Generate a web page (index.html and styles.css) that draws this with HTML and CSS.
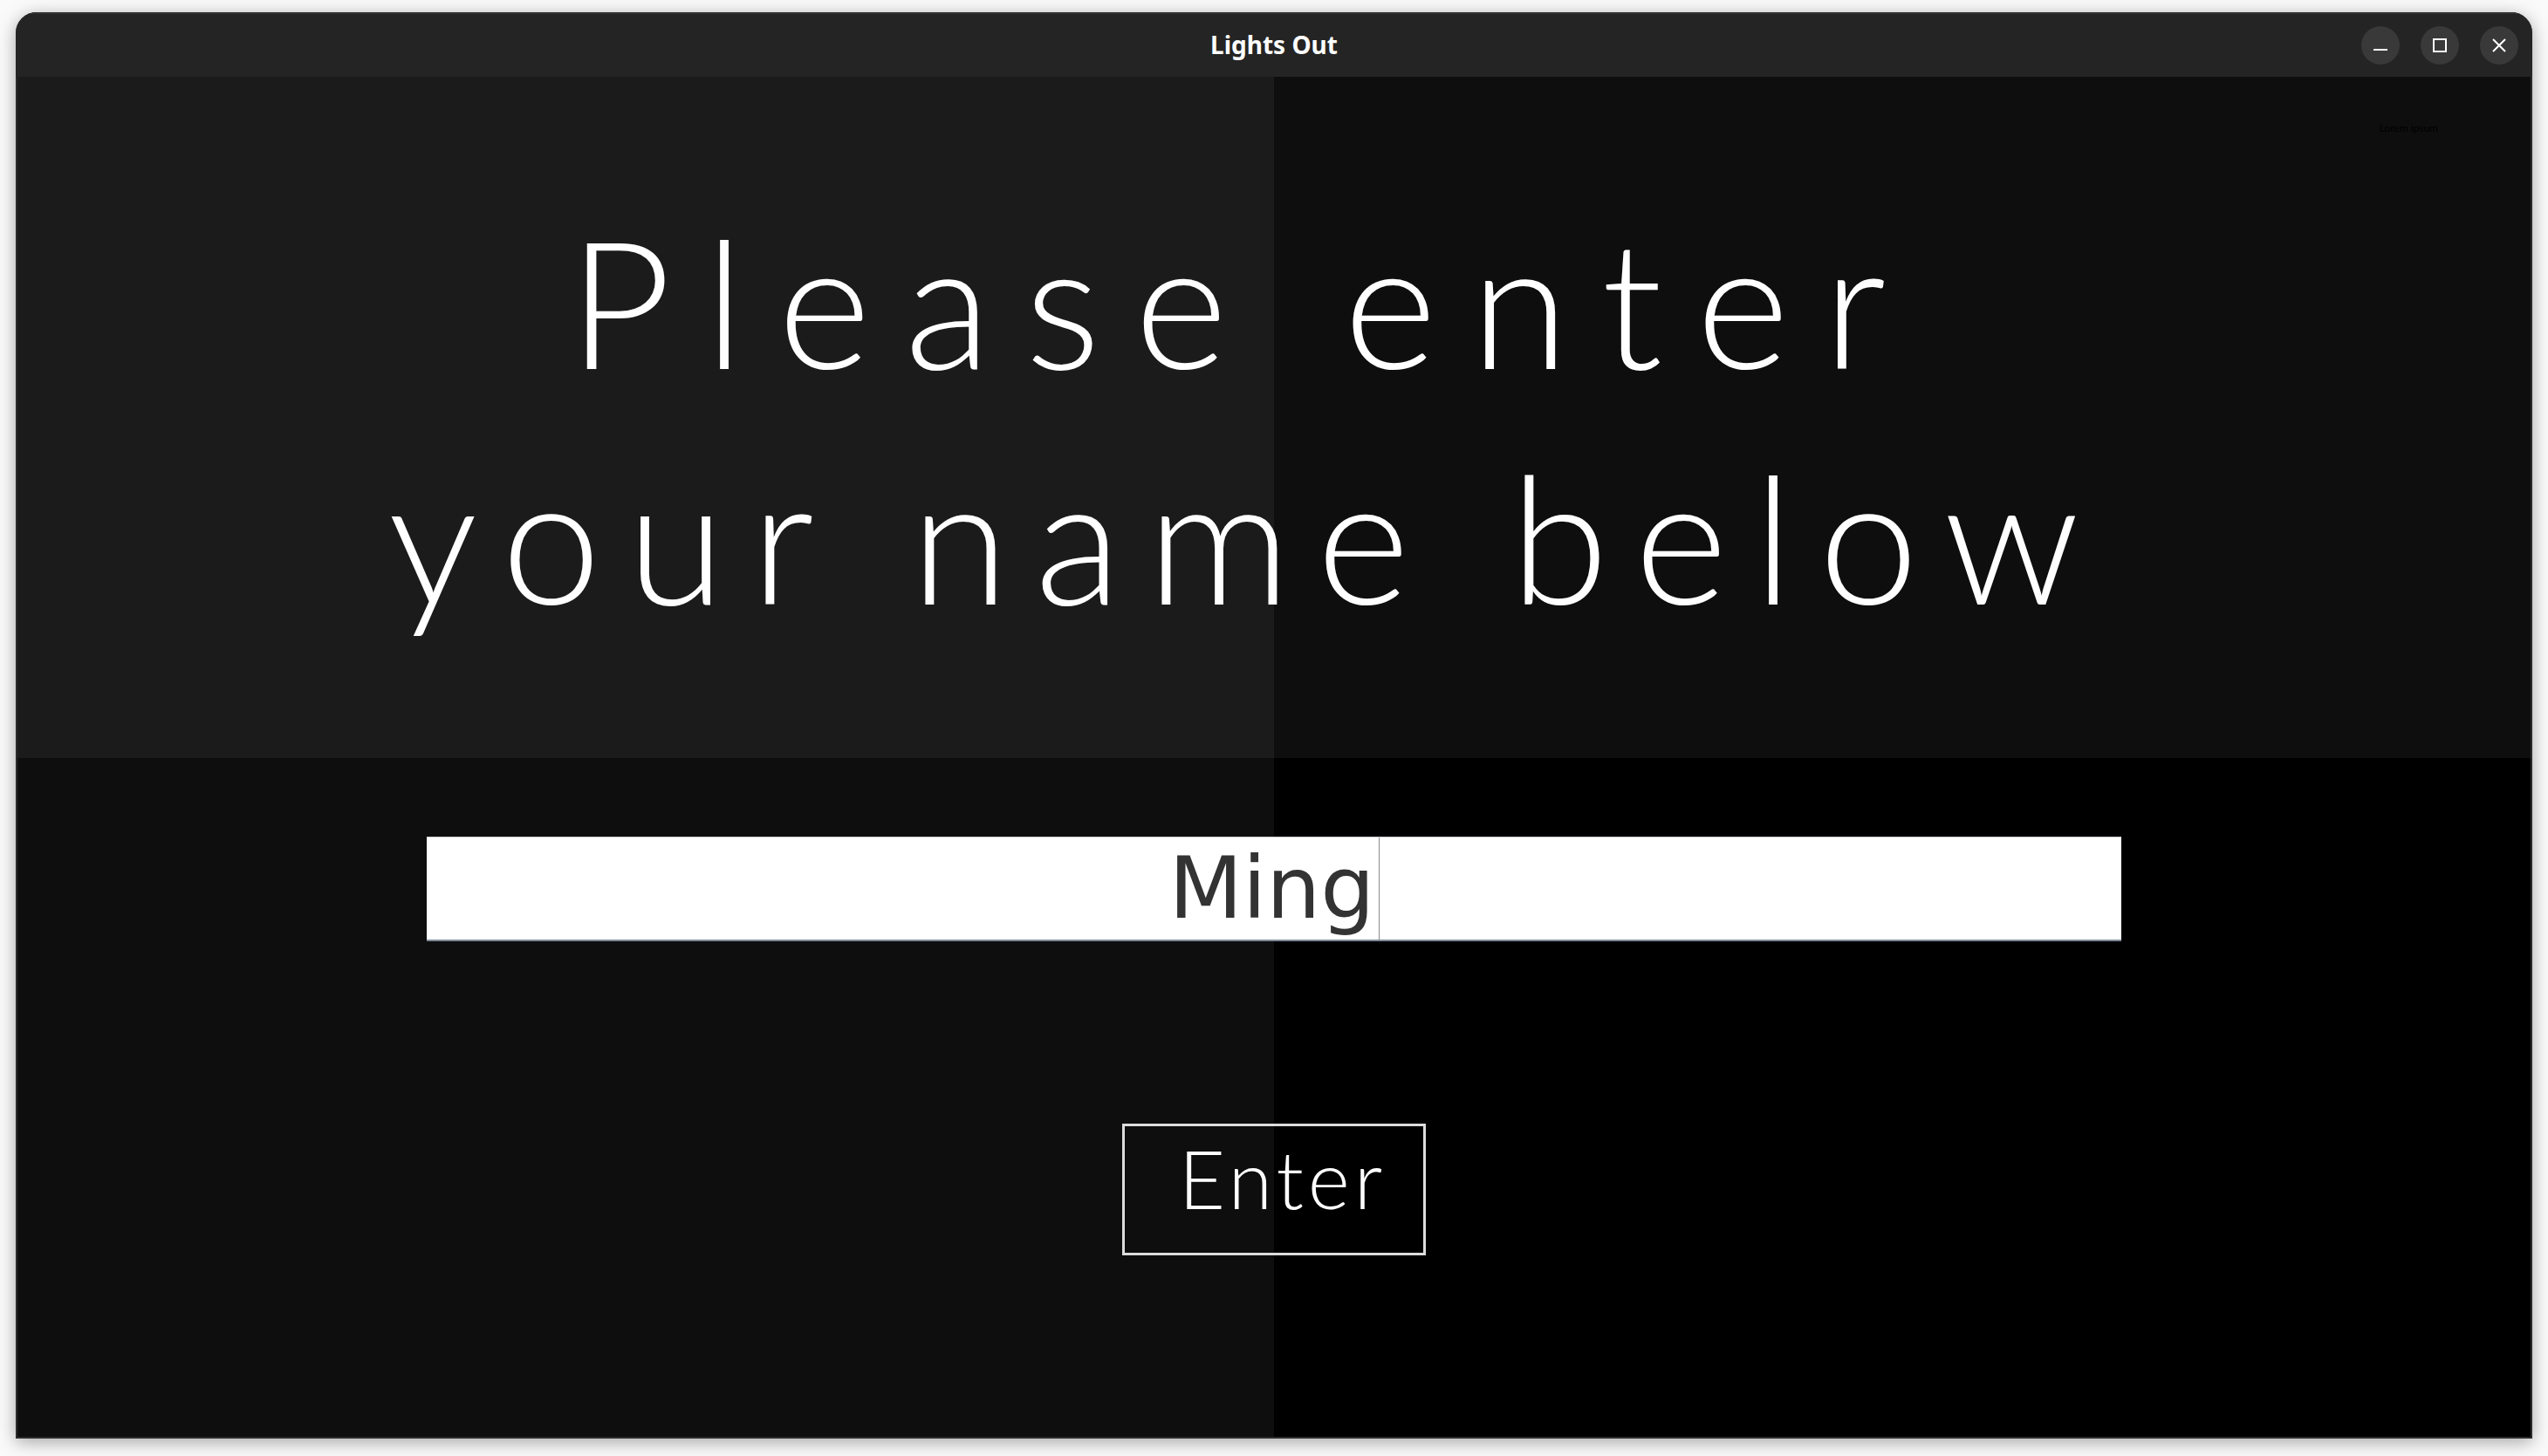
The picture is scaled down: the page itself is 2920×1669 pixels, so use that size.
FILE: index.html
```html
<!DOCTYPE html>
<html lang="en">
<head>
<meta charset="utf-8">
<title>Lights Out</title>
<link rel="stylesheet" href="styles.css">
</head>
<body>
<div class="window">
  <header class="titlebar">
    <div class="title">Lights Out</div>
    <div class="controls">
      <button class="ctl" aria-label="Minimize">
        <svg width="16" height="16" viewBox="0 0 16 16"><path d="M0 13h16" stroke="#fff" stroke-width="2"/></svg>
      </button>
      <button class="ctl" aria-label="Maximize">
        <svg width="16" height="16" viewBox="0 0 16 16"><rect x="1" y="1" width="14" height="14" fill="none" stroke="#fff" stroke-width="2"/></svg>
      </button>
      <button class="ctl" aria-label="Close">
        <svg width="16" height="16" viewBox="0 0 16 16"><path d="M1 1L15 15M15 1L1 15" stroke="#fff" stroke-width="2"/></svg>
      </button>
    </div>
  </header>
  <main class="content">
    <section class="top">
      <span class="lorem">Lorem ipsum</span>
      <h1 class="heading"><span class="line line-one">Please enter</span><span class="line line-two">your name below</span></h1>
    </section>
    <section class="bottom">
      <div class="namefield"><span class="nametext">Ming</span><span class="caret"></span></div>
      <button class="enter">Enter</button>
    </section>
  </main>
</div>
</body>
</html>
```

FILE: styles.css
```css
html, body {
  margin: 0;
  padding: 0;
  height: 100%;
}
body {
  background: #fafafa;
  overflow: hidden;
}
.window {
  margin: 14px 18px 0 18px;
  height: 1635px;
  display: flex;
  flex-direction: column;
  border-radius: 24px 24px 0 0;
  overflow: hidden;
  background: #2b2b2b;
  box-shadow: 0 4px 20px rgba(0,0,0,0.35);
}
.titlebar {
  height: 74px;
  flex: none;
  background: #242424;
  box-shadow: inset 0 2px 0 #333333;
  display: flex;
  align-items: center;
  justify-content: center;
  position: relative;
}
.title {
  font-family: "Noto Sans", "Open Sans", sans-serif;
  font-weight: 700;
  font-size: 28px;
  color: #ffffff;
}
.controls {
  position: absolute;
  right: 16px;
  top: 16px;
  display: flex;
  gap: 24px;
}
.ctl {
  width: 44px;
  height: 44px;
  border-radius: 50%;
  border: 0;
  padding: 0;
  background: #393939;
  display: flex;
  align-items: center;
  justify-content: center;
}
.content {
  flex: 1;
  display: flex;
  flex-direction: column;
  margin: 0 2px 2px 2px;
}
.top {
  flex: 0 0 781px;
  background: linear-gradient(to right, #1b1b1b 50%, #0e0e0e 50%);
  display: flex;
  align-items: center;
  justify-content: center;
  position: relative;
}
.lorem {
  position: absolute;
  right: 106px;
  top: 51px;
  font-family: "Lato", "Noto Sans", sans-serif;
  font-size: 12px;
  color: #000000;
}
.heading {
  margin: 0;
  font-family: "Lato", sans-serif;
  font-weight: 300;
  font-size: 204px;
  line-height: 270px;
  color: #ffffff;
  text-align: center;
  display: flex;
  flex-direction: column;
  align-items: center;
}
.line {
  display: block;
}
.line-one {
  letter-spacing: 39px;
  margin-right: 68px;
}
.line-two {
  letter-spacing: 30px;
  margin-right: 62px;
}
.bottom {
  flex: 1;
  background: linear-gradient(to right, #0e0e0e 50%, #000000 50%);
  display: flex;
  flex-direction: column;
  align-items: center;
  padding-top: 90px;
  gap: 209px;
}
.namefield {
  width: 1942px;
  height: 120px;
  box-sizing: border-box;
  background: #ffffff;
  border-top: 1px solid #c9cdd2;
  border-bottom: 2px solid #7d8b98;
  display: flex;
  justify-content: center;
  align-items: stretch;
}
.nametext {
  font-family: "DejaVu Sans", sans-serif;
  font-size: 98px;
  line-height: 117px;
  color: #333333;
}
.caret {
  width: 1px;
  margin-left: 4px;
  background: #8a8a8a;
}
.enter {
  width: 348px;
  height: 151px;
  box-sizing: border-box;
  border: 3px solid #dcdcdc;
  background: transparent;
  color: #ffffff;
  font-family: "Lato", sans-serif;
  font-weight: 300;
  font-size: 92px;
  letter-spacing: 5px;
  padding: 0 0 26px 20px;
}
```
